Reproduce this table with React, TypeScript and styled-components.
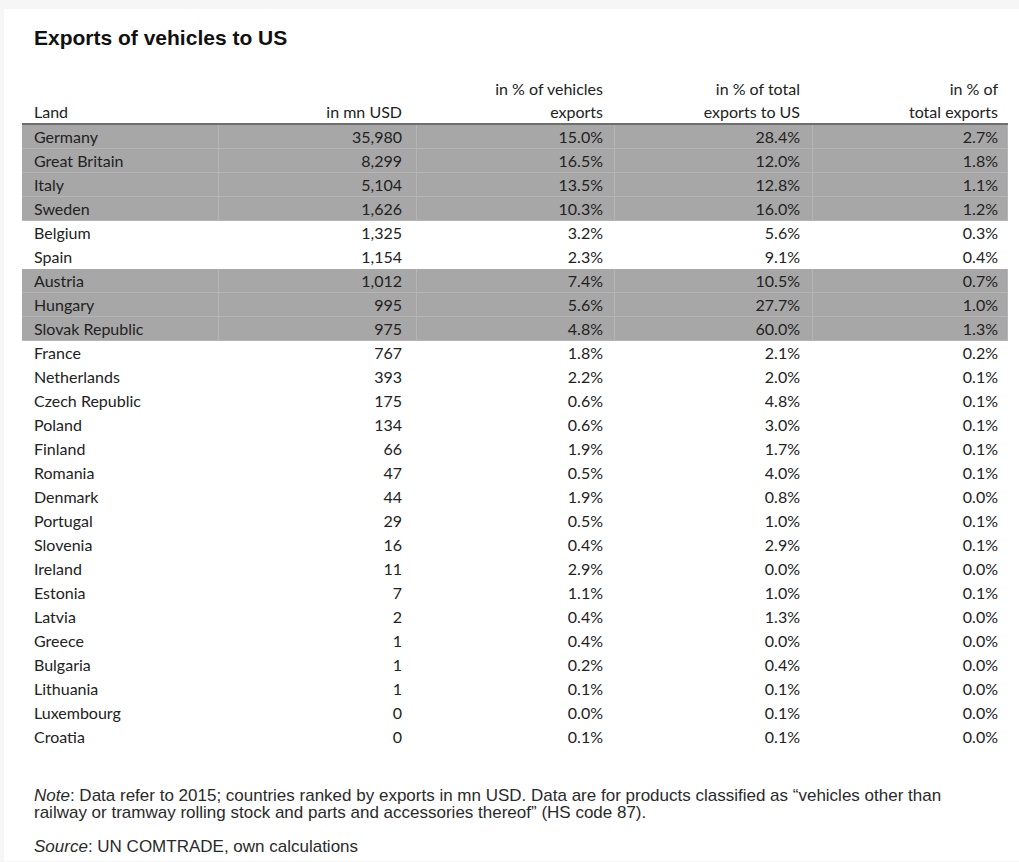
import styled, { createGlobalStyle } from 'styled-components'

const GlobalStyle = createGlobalStyle`
    html, body {
        margin: 0;
        padding: 0;
        background: #f6f6f6;
    }
`

declare interface Row {
    land: string
    usd: string
    vehicles: string
    toUs: string
    total: string
    shaded?: boolean
}

const rows: Row[] = [
    { land: 'Germany', usd: '35,980', vehicles: '15.0%', toUs: '28.4%', total: '2.7%', shaded: true },
    { land: 'Great Britain', usd: '8,299', vehicles: '16.5%', toUs: '12.0%', total: '1.8%', shaded: true },
    { land: 'Italy', usd: '5,104', vehicles: '13.5%', toUs: '12.8%', total: '1.1%', shaded: true },
    { land: 'Sweden', usd: '1,626', vehicles: '10.3%', toUs: '16.0%', total: '1.2%', shaded: true },
    { land: 'Belgium', usd: '1,325', vehicles: '3.2%', toUs: '5.6%', total: '0.3%' },
    { land: 'Spain', usd: '1,154', vehicles: '2.3%', toUs: '9.1%', total: '0.4%' },
    { land: 'Austria', usd: '1,012', vehicles: '7.4%', toUs: '10.5%', total: '0.7%', shaded: true },
    { land: 'Hungary', usd: '995', vehicles: '5.6%', toUs: '27.7%', total: '1.0%', shaded: true },
    { land: 'Slovak Republic', usd: '975', vehicles: '4.8%', toUs: '60.0%', total: '1.3%', shaded: true },
    { land: 'France', usd: '767', vehicles: '1.8%', toUs: '2.1%', total: '0.2%' },
    { land: 'Netherlands', usd: '393', vehicles: '2.2%', toUs: '2.0%', total: '0.1%' },
    { land: 'Czech Republic', usd: '175', vehicles: '0.6%', toUs: '4.8%', total: '0.1%' },
    { land: 'Poland', usd: '134', vehicles: '0.6%', toUs: '3.0%', total: '0.1%' },
    { land: 'Finland', usd: '66', vehicles: '1.9%', toUs: '1.7%', total: '0.1%' },
    { land: 'Romania', usd: '47', vehicles: '0.5%', toUs: '4.0%', total: '0.1%' },
    { land: 'Denmark', usd: '44', vehicles: '1.9%', toUs: '0.8%', total: '0.0%' },
    { land: 'Portugal', usd: '29', vehicles: '0.5%', toUs: '1.0%', total: '0.1%' },
    { land: 'Slovenia', usd: '16', vehicles: '0.4%', toUs: '2.9%', total: '0.1%' },
    { land: 'Ireland', usd: '11', vehicles: '2.9%', toUs: '0.0%', total: '0.0%' },
    { land: 'Estonia', usd: '7', vehicles: '1.1%', toUs: '1.0%', total: '0.1%' },
    { land: 'Latvia', usd: '2', vehicles: '0.4%', toUs: '1.3%', total: '0.0%' },
    { land: 'Greece', usd: '1', vehicles: '0.4%', toUs: '0.0%', total: '0.0%' },
    { land: 'Bulgaria', usd: '1', vehicles: '0.2%', toUs: '0.4%', total: '0.0%' },
    { land: 'Lithuania', usd: '1', vehicles: '0.1%', toUs: '0.1%', total: '0.0%' },
    { land: 'Luxembourg', usd: '0', vehicles: '0.0%', toUs: '0.1%', total: '0.0%' },
    { land: 'Croatia', usd: '0', vehicles: '0.1%', toUs: '0.1%', total: '0.0%' },
]

// column widths and right indent, like the excel sheet
const colWidths = [197, 198, 198, 198, 195]
const colPad = [12, 15, 12, 13, 10]

const Card = styled.div`
    margin: 9px 0 0 4px;
    padding: 17px 0 6px 18px;
    background: #ffffff;
`

const Title = styled.h1`
    margin: 0 0 27px 12px;
    font-family: "Liberation Sans", Arial, sans-serif;
    font-size: 21px;
    line-height: 24px;
    font-weight: bold;
    color: #111;
`

const Table = styled.table`
    table-layout: fixed;
    width: 986px;
    border-collapse: separate;
    border-spacing: 0;
    font-family: Lato, "Open Sans", sans-serif;
    font-size: 16px;
    color: #222;
`

const HeadCell = styled.th<{ $left?: boolean; $pad: number }>`
    padding: 0 ${p => p.$left ? 0 : p.$pad}px 0 ${p => p.$left ? p.$pad : 0}px;
    font-weight: normal;
    line-height: 23px;
    text-align: ${p => p.$left ? 'left' : 'right'};
    vertical-align: bottom;
    border-bottom: 2px solid #6e6e6e;
`

const Cell = styled.td<{ $left?: boolean; $pad: number; $shade?: boolean }>`
    height: 24px;
    padding: 0 ${p => p.$left ? 0 : p.$pad}px 0 ${p => p.$left ? p.$pad : 0}px;
    line-height: 24px;
    white-space: nowrap;
    text-align: ${p => p.$left ? 'left' : 'right'};
    background: ${p => p.$shade ? '#a7a7a7' : 'transparent'};
    box-shadow: ${p => p.$shade ? 'inset -1px -1px 0 rgba(255,255,255,0.16)' : 'none'};
`

const Notes = styled.div`
    margin: 38px 0 0 12px;
    font-family: "Liberation Sans", Arial, sans-serif;
    font-size: 17px;
    line-height: 17px;
    color: #2a2a2a;
`

const NoteLine = styled.p`
    margin: 0 0 17px;
    &:last-child { margin-bottom: 0; }
`

export default function App() {
    const headers = [
        <>Land</>,
        <>in mn USD</>,
        <>in % of vehicles<br />exports</>,
        <>in % of total<br />exports to US</>,
        <>in % of<br />total exports</>,
    ]

    return (
        <>
            <GlobalStyle />
            <Card>
                <Title>Exports of vehicles to US</Title>
                <Table>
                    <colgroup>
                        {colWidths.map((w, i) => <col key={i} style={{ width: w }} />)}
                    </colgroup>
                    <thead>
                        <tr>
                            {headers.map((h, i) => (
                                <HeadCell key={i} $left={i === 0} $pad={colPad[i]}>{h}</HeadCell>
                            ))}
                        </tr>
                    </thead>
                    <tbody>
                        {rows.map(r => {
                            const values = [r.land, r.usd, r.vehicles, r.toUs, r.total]
                            return (
                                <tr key={r.land}>
                                    {values.map((v, i) => (
                                        <Cell key={i} $left={i === 0} $pad={colPad[i]} $shade={r.shaded}>{v}</Cell>
                                    ))}
                                </tr>
                            )
                        })}
                    </tbody>
                </Table>
                <Notes>
                    <NoteLine>
                        <i>Note</i>: Data refer to 2015; countries ranked by exports in mn USD. Data are for products classified as “vehicles other than<br />
                        railway or tramway rolling stock and parts and accessories thereof” (HS code 87).
                    </NoteLine>
                    <NoteLine>
                        <i>Source</i>: UN COMTRADE, own calculations
                    </NoteLine>
                </Notes>
            </Card>
        </>
    )
}
